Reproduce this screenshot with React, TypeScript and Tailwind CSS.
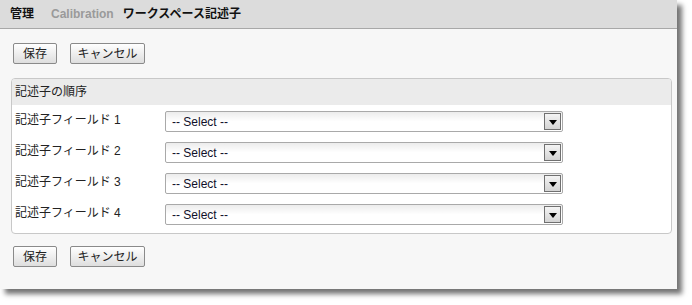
import React from "react";

const font = { fontFamily: '"Liberation Sans", "Noto Sans CJK JP", Arial, sans-serif' };

function Btn({ label, w }: { label: string; w: string }) {
  return (
    <button
      className={`${w} h-[21px] border border-[#8a8a8a] rounded-[2px] bg-gradient-to-b from-[#ffffff] to-[#dedede] text-[12px] text-[#222] flex items-center justify-center leading-none`}
    >
      {label}
    </button>
  );
}

function SelectBox() {
  return (
    <div className="relative w-[398px] h-[21px] border border-[#a9a9a9] rounded-[2px] bg-gradient-to-b from-[#ececec] via-[#ffffff] to-[#ffffff] flex items-center">
      <span className="pl-[6px] text-[12px] text-[#10102a] leading-none">-- Select --</span>
      <div className="absolute right-[1px] top-[1px] w-[17px] h-[17px] border border-[#707070] bg-gradient-to-b from-[#f4f4f4] to-[#d4d4d4] flex items-center justify-center">
        <svg width="8" height="5" viewBox="0 0 8 5" className="mt-[2px]">
          <polygon points="0,0 8,0 4,5" fill="#000" />
        </svg>
      </div>
    </div>
  );
}

export default function App() {
  return (
    <div className="w-[692px] h-[305px] bg-white" style={font}>
      <div className="w-[677px] h-[289px] bg-[#f7f7f7] shadow-[5px_5px_5px_rgba(0,0,0,0.55)] flex flex-col">
        <div className="h-[29px] bg-[#dcdcdc] border-b border-[#a8a8a8] flex items-center text-[12px] font-bold">
          <span className="ml-[10px] text-[#111]">管理</span>
          <span className="ml-[17px] text-[#9a9a9a]">Calibration</span>
          <span className="ml-[9px] text-[#111]">ワークスペース記述子</span>
        </div>
        <div className="flex gap-[13px] pl-[13px] mt-[14px]">
          <Btn label="保存" w="w-[44px]" />
          <Btn label="キャンセル" w="w-[75px]" />
        </div>
        <div className="ml-[11px] mt-[14px] w-[661px] border border-[#c8c8c8] rounded-[4px] bg-white overflow-hidden">
          <div className="h-[26px] bg-[#ebebeb] flex items-center pl-[3px] text-[12px] text-[#222]">
            記述子の順序
          </div>
          <div className="flex flex-col gap-[10px] pt-[6px] pb-[8px]">
            {[1, 2, 3, 4].map((n) => (
              <div key={n} className="flex items-center h-[21px]">
                <div className="w-[153px] pl-[3px] text-[12px] text-[#222] -mt-[3px]">
                  記述子フィールド {n}
                </div>
                <SelectBox />
              </div>
            ))}
          </div>
        </div>
        <div className="flex gap-[13px] pl-[13px] mt-[12px]">
          <Btn label="保存" w="w-[44px]" />
          <Btn label="キャンセル" w="w-[75px]" />
        </div>
      </div>
    </div>
  );
}
